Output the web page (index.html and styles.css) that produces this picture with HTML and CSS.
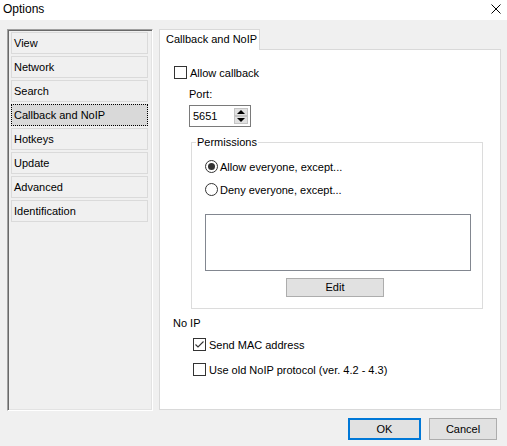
FILE: index.html
```html
<!DOCTYPE html>
<html>
<head>
<meta charset="utf-8">
<link rel="stylesheet" href="styles.css">
</head>
<body>
<div class="window">
  <div class="titlebar">
    <span class="title">Options</span>
    <svg class="close" width="10" height="10" viewBox="0 0 10 10"><path d="M0.5 0.5 L9.5 9.5 M9.5 0.5 L0.5 9.5" stroke="#000" stroke-width="1" fill="none"/></svg>
  </div>
  <div class="main">
    <div class="sidebar">
      <div class="item">View</div>
      <div class="item">Network</div>
      <div class="item">Search</div>
      <div class="item selected">Callback and NoIP</div>
      <div class="item">Hotkeys</div>
      <div class="item">Update</div>
      <div class="item">Advanced</div>
      <div class="item">Identification</div>
    </div>
    <div class="tabs">
      <div class="tabstrip"><div class="tab">Callback and NoIP</div></div>
      <div class="pane">
        <div class="check allow"><span class="box"></span><span>Allow callback</span></div>
        <div class="port-label">Port:</div>
        <div class="spinner">
          <span class="val">5651</span>
          <span class="spin"><span class="sbtn"><span class="tri-up"></span></span><span class="sbtn"><span class="tri-down"></span></span></span>
        </div>
        <div class="group">
          <span class="legend">Permissions</span>
          <div class="radio r1"><span class="circle on"></span><span>Allow everyone, except...</span></div>
          <div class="radio r2"><span class="circle"></span><span>Deny everyone, except...</span></div>
          <div class="listbox"></div>
          <div class="btnrow"><div class="btn edit">Edit</div></div>
        </div>
        <div class="noip">No IP</div>
        <div class="check mac"><span class="box"><svg width="11" height="11" viewBox="0 0 11 11"><path d="M1.5 5.5 L4 8 L9.5 2.5" stroke="#333" stroke-width="1.1" fill="none"/></svg></span><span>Send MAC address</span></div>
        <div class="check old"><span class="box"></span><span>Use old NoIP protocol (ver. 4.2 - 4.3)</span></div>
      </div>
    </div>
  </div>
  <div class="footer">
    <div class="btn ok">OK</div>
    <div class="btn cancel">Cancel</div>
  </div>
</div>
</body>
</html>
```

FILE: styles.css
```css
* { box-sizing: border-box; }
html, body { margin: 0; padding: 0; }
body {
  font-family: "Liberation Sans", Arial, sans-serif;
  font-size: 11px;
  color: #000;
  background: #f0f0f0;
}
.window {
  width: 507px;
  height: 446px;
  background: #f0f0f0;
  display: flex;
  flex-direction: column;
}
.titlebar {
  height: 20px;
  background: #fff;
  display: flex;
  align-items: center;
  justify-content: space-between;
  padding: 0 6px 0 3px;
}
.title {
  font-size: 12px;
  line-height: 20px;
  margin-top: -2px;
}
.close { display: block; margin-top: -3px; }

.main {
  display: flex;
  padding: 9px 0 0 7px;
  gap: 6px;
  height: 390px;
}
.sidebar {
  width: 146px;
  height: 382px;
  border-top: 1px solid #a0a0a0;
  border-left: 1px solid #a0a0a0;
  border-right: 1px solid #fff;
  border-bottom: 1px solid #fff;
  box-shadow: inset 1px 1px 0 #696969, inset -1px -1px 0 #e3e3e3;
  padding: 2px 0 0 3px;
  display: flex;
  flex-direction: column;
  gap: 2px;
}
.item {
  width: 137px;
  height: 22px;
  border: 1px solid #dadada;
  padding-left: 2px;
  line-height: 20px;
  white-space: nowrap;
}
.item.selected {
  background: #d9d9d9;
  outline: 1px dotted #000;
  outline-offset: -1px;
}

.tabs {
  width: 342px;
  display: flex;
  flex-direction: column;
}
.tabstrip {
  height: 20px;
  display: flex;
}
.tab {
  position: relative;
  z-index: 1;
  width: 101px;
  height: 21px;
  background: #fff;
  border: 1px solid #d9d9d9;
  border-bottom: none;
  padding-left: 6px;
  line-height: 18px;
  white-space: nowrap;
}
.pane {
  height: 361px;
  background: #fff;
  border: 1px solid #d9d9d9;
  padding: 16px 0 0 14px;
}
.check {
  display: flex;
  align-items: center;
  gap: 3px;
  height: 13px;
  white-space: nowrap;
}
.box {
  width: 13px;
  height: 13px;
  border: 1px solid #333;
  background: #fff;
  flex: none;
  display: flex;
}
.port-label {
  margin: 9px 0 0 15px;
  line-height: 13px;
}
.spinner {
  margin: 4px 0 0 15px;
  width: 62px;
  height: 22px;
  border: 1px solid #7a7a7a;
  display: flex;
  justify-content: space-between;
  padding: 2px 2px 0 3px;
}
.val { line-height: 17px; }
.spin {
  display: flex;
  flex-direction: column;
  width: 14px;
  height: 16px;
}
.sbtn {
  flex: 1;
  background: #e1e1e1;
  border: 1px solid #c4c4c4;
  display: flex;
  align-items: center;
  justify-content: center;
}
.tri-up {
  width: 0; height: 0;
  border-left: 4px solid transparent;
  border-right: 4px solid transparent;
  border-bottom: 4px solid #000;
}
.tri-down {
  width: 0; height: 0;
  border-left: 4px solid transparent;
  border-right: 4px solid transparent;
  border-top: 4px solid #000;
}
.group {
  position: relative;
  margin: 15px 0 0 17px;
  width: 292px;
  height: 167px;
  border: 1px solid #dcdcdc;
  padding: 17px 0 0 13px;
}
.legend {
  position: absolute;
  top: -7px;
  left: 4px;
  background: #fff;
  padding: 0 1px;
  line-height: 13px;
}
.radio {
  display: flex;
  align-items: center;
  gap: 2px;
  height: 13px;
  white-space: nowrap;
}
.r2 { margin-top: 10px; }
.circle {
  width: 13px;
  height: 13px;
  border: 1px solid #333;
  border-radius: 50%;
  background: #fff;
  flex: none;
  display: flex;
  align-items: center;
  justify-content: center;
}
.circle.on::after {
  content: "";
  width: 7px;
  height: 7px;
  border-radius: 50%;
  background: #333;
}
.listbox {
  margin-top: 18px;
  width: 266px;
  height: 57px;
  border: 1px solid #828790;
  background: #fff;
}
.btnrow {
  display: flex;
  margin-top: 7px;
  padding-left: 81px;
}
.btn {
  background: #e1e1e1;
  border: 1px solid #adadad;
  text-align: center;
}
.edit {
  width: 98px;
  height: 19px;
  line-height: 17px;
}
.noip {
  margin: 8px 0 0 -1px;
  line-height: 13px;
}
.mac { margin: 8px 0 0 19px; }
.old { margin: 12px 0 0 19px; }

.footer {
  display: flex;
  justify-content: flex-end;
  gap: 8px;
  padding: 8px 10px 0 0;
}
.ok {
  width: 73px;
  height: 22px;
  border: 2px solid #0078d7;
  line-height: 18px;
}
.cancel {
  width: 68px;
  height: 22px;
  line-height: 20px;
}
```
